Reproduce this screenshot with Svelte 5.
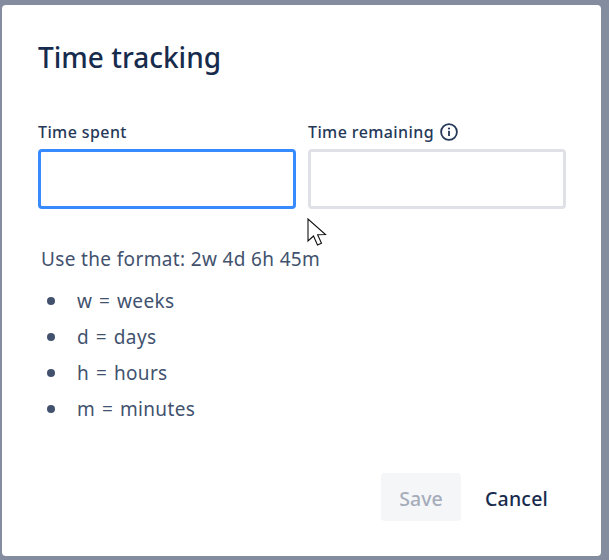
<script>
    const units = [
        'w = weeks',
        'd = days',
        'h = hours',
        'm = minutes'
    ]
</script>

<div class="backdrop">
    <div class="modal">
        <h1>Time tracking</h1>
        <div class="fields">
            <div class="field">
                <label for="spent">Time spent</label>
                <input id="spent" class="focused" type="text" />
            </div>
            <div class="field">
                <label for="remaining">
                    Time remaining
                    <svg class="info" width="20" height="20" viewBox="0 0 20 20" fill="none">
                        <circle cx="10" cy="10" r="7.9" stroke="#253858" stroke-width="1.8" />
                        <rect x="9.1" y="8.8" width="1.8" height="5.2" fill="#253858" />
                        <circle cx="10" cy="6.5" r="1.1" fill="#253858" />
                    </svg>
                </label>
                <input id="remaining" type="text" />
            </div>
        </div>
        <p class="hint">Use the format: 2w 4d 6h 45m</p>
        <ul>
            {#each units as unit}
                <li>{unit}</li>
            {/each}
        </ul>
        <div class="actions">
            <button class="save" disabled>Save</button>
            <button class="cancel">Cancel</button>
        </div>
        <svg class="cursor" width="22" height="30" viewBox="0 0 22 30">
            <path d="M1 1 L1 23 L6.5 18 L10.5 27 L14.5 25.2 L10.6 16.8 L18.5 16.5 Z" fill="#fff" stroke="#111" stroke-width="1.1" stroke-linejoin="miter" />
        </svg>
    </div>
</div>

<style>
    :global(body) {
        background-color: #838d9f;
    }
    .backdrop {
        height: 560px;
        box-sizing: border-box;
        padding: 5px 8px 4px 2px;
        font-family: "Noto Sans", sans-serif;
    }
    .modal {
        position: relative;
        height: 100%;
        box-sizing: border-box;
        padding: 32px 35px 0 36px;
        background-color: #fff;
        border-radius: 4px;
        display: flex;
        flex-direction: column;
    }
    h1 {
        margin: 0;
        font-size: 28px;
        line-height: 40px;
        font-weight: 500;
        color: #172b4d;
    }
    .fields {
        display: grid;
        grid-template-columns: 258px 258px;
        column-gap: 12px;
        margin-top: 43px;
    }
    .field {
        display: flex;
        flex-direction: column;
    }
    label {
        display: flex;
        align-items: center;
        gap: 5px;
        height: 24px;
        margin-bottom: 5px;
        font-size: 16px;
        letter-spacing: 0.4px;
        font-weight: 500;
        color: #253858;
    }
    input {
        box-sizing: border-box;
        width: 258px;
        height: 60px;
        margin: 0;
        border: 3px solid #dfe1e6;
        border-radius: 4px;
        background: #fff;
        outline: none;
    }
    input.focused {
        border-color: #388bff;
    }
    .hint {
        margin: 36px 0 0 3px;
        font-size: 19px;
        letter-spacing: 0.35px;
        line-height: 28px;
        color: #42526e;
    }
    ul {
        list-style: none;
        margin: 10px 0 0;
        padding: 0;
        color: #42526e;
    }
    li {
        position: relative;
        height: 36px;
        padding-left: 39px;
        font-size: 19px;
        letter-spacing: 0.35px;
        word-spacing: 1.5px;
        line-height: 36px;
    }
    li::before {
        content: "";
        position: absolute;
        left: 9px;
        top: 14px;
        width: 8px;
        height: 8px;
        border-radius: 50%;
        background-color: #42526e;
    }
    .actions {
        display: flex;
        justify-content: flex-end;
        align-items: center;
        margin-top: 46px;
    }
    button {
        height: 48px;
        border: none;
        border-radius: 4px;
        background: none;
        font-family: inherit;
        font-size: 19.5px;
        font-weight: 500;
        padding: 2px 0 0;
    }
    .save {
        width: 80px;
        background-color: #f5f6f8;
        color: #a5adba;
    }
    .cancel {
        width: 111px;
        color: #172b4d;
        margin-right: -6px;
        letter-spacing: 0.2px;
    }
    .cursor {
        position: absolute;
        left: 305px;
        top: 213px;
    }
</style>
